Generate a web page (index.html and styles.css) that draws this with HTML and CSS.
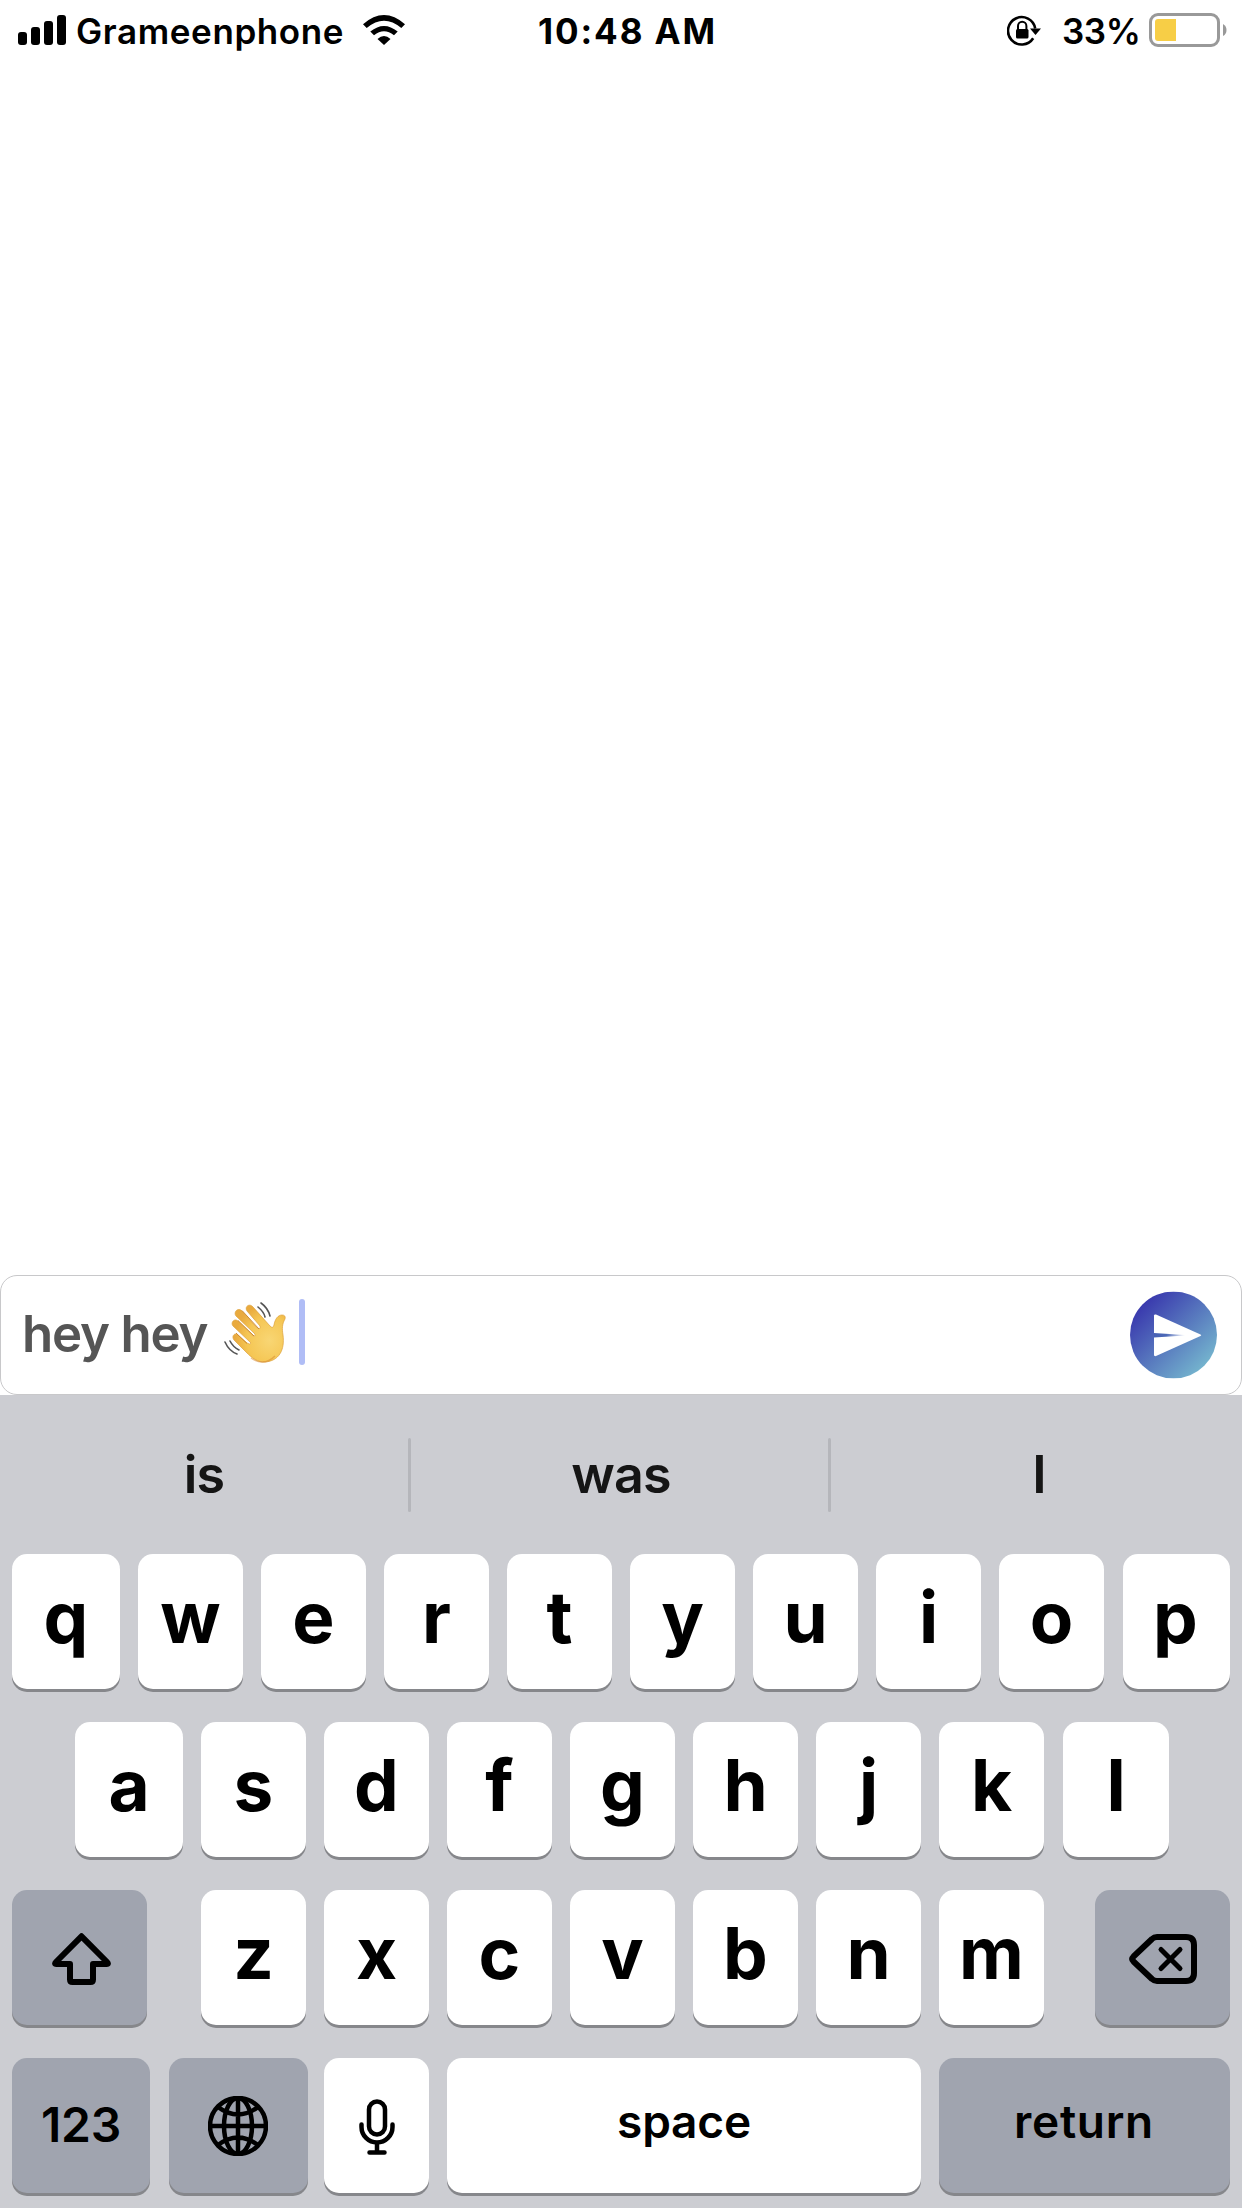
FILE: index.html
```html
<!DOCTYPE html>
<html lang="en">
<head>
<meta charset="utf-8">
<title>Chat</title>
<link rel="stylesheet" href="styles.css">
</head>
<body>
<div class="screen">
  <header class="status">
    <div class="status-left">
      <svg class="signal" width="48" height="30" viewBox="0 0 48 30"><rect x="0" y="17" width="9" height="13" rx="3"/><rect x="13" y="12" width="9" height="18" rx="3"/><rect x="26" y="6" width="9" height="24" rx="3"/><rect x="39" y="0" width="9" height="30" rx="3"/></svg>
      <span class="carrier">Grameenphone</span>
      <svg class="wifi" width="42" height="30" viewBox="0 0 42 30"><path d="M0 9.2Q21-9.200 42 9.200L38.300 13Q21-1.600 3.700 13Z"/><path d="M7.300 16.600Q21 5.200 34.700 16.600L31 20.300Q21 12.400 11 20.300Z"/><path d="M14.500 24Q21 18 27.500 24L21 30Z"/></svg>
    </div>
    <span class="clock">10:48 AM</span>
    <div class="status-right">
      <svg class="lock" width="34" height="31" viewBox="0 0 34 31"><path d="M26.200 23.300A13.700 13.700 0 1 1 28.200 13.500" fill="none" stroke="#000" stroke-width="2.600"/><path d="M23 13.500h11l-5.500 6.500z"/><rect x="9" y="14" width="12.500" height="9.500" rx="1.500"/><path d="M11 15v-4a4.200 4.200 0 0 1 8.400 0v4" fill="none" stroke="#000" stroke-width="2"/></svg>
      <span class="percent">33%</span>
      <svg class="battery" width="78" height="34" viewBox="0 0 78 34"><rect x="1.500" y="1.500" width="68" height="31" rx="7.500" fill="none" stroke="#999" stroke-width="3"/><path d="M6 9Q6 6 9 6H27V28H9Q6 28 6 25Z" fill="#f7ce46"/><path d="M74 11Q77.500 13 77.500 17T74 23Z" fill="#999"/></svg>
    </div>
  </header>
  <main class="messages"></main>
  <div class="composer">
    <span class="draft">hey hey</span>
    <svg class="wave" width="62" height="62" viewBox="0 0 62 62" role="img" aria-label="waving hand">
      <defs><radialGradient id="skin" cx=".7" cy=".62" r=".65"><stop offset="0" stop-color="#f8d674"/><stop offset=".65" stop-color="#f5c653"/><stop offset="1" stop-color="#e9aa3e"/></radialGradient></defs>
      <path d="M41 60C34 61 27 55 23 51L10 38C7 34 11 30 14 33L23 41Q26 43 27 41L9 24C6 20 11 16 14 19L29 34Q32 35 31 32L12 14C9 10 14 5 18 9L33 26Q37 28 36 24L23 9C20 4 26 1 29 5L46 24Q49 27 50 23C51 17 54 13 58 13Q62 13 61 17C58 22 58 27 59 33C61 48 55 59 41 60Z" fill="url(#skin)" stroke="#dda03b" stroke-width=".7"/>
      <path d="M12 31L23 41.500M14 18.500L30 34M18 8.500L35 27" fill="none" stroke="#cf8a2d" stroke-width="1"/>
      <path d="M27 56Q40 65 51 54" fill="none" stroke="#d78d35" stroke-width="1.500" opacity=".55"/>
      <path d="M37 1Q44 6 46 14M34 5Q40 10 41 15M1 40Q5 49 13 52M6 39Q9 45 15 48" fill="none" stroke="#555" stroke-width="1.600" stroke-linecap="round"/>
    </svg>
    <i class="caret"></i>
    <svg class="send" width="87" height="87" viewBox="0 0 87 87"><defs><linearGradient id="send" x1=".15" y1=".15" x2=".85" y2=".85"><stop stop-color="#3a3aae"/><stop offset="1" stop-color="#73b2cd"/></linearGradient><linearGradient id="fold"><stop stop-color="#4861b4"/><stop offset=".4" stop-color="#4c69b7"/><stop offset="1" stop-color="#fff"/></linearGradient></defs><circle cx="43.500" cy="43.500" r="43.500" fill="url(#send)"/><path d="M24 24Q24 22.500 26 23L70.500 43Q72 43.700 70.500 44.500L26 64.500Q24 65 24 63.500Z" fill="#fff"/><path d="M24 41.500L55 43.500V44L24 46Z" fill="url(#fold)"/></svg>
  </div>
  <section class="keyboard">
    <div class="suggestions"><span>is</span><i></i><span>was</span><i></i><span>I</span></div>
    <div class="keys row1"><b>q</b><b>w</b><b>e</b><b>r</b><b>t</b><b>y</b><b>u</b><b>i</b><b>o</b><b>p</b></div>
    <div class="keys row2"><b>a</b><b>s</b><b>d</b><b>f</b><b>g</b><b>h</b><b>j</b><b>k</b><b>l</b></div>
    <div class="keys row3">
      <b class="dark icon shift"><svg width="59" height="52" viewBox="0 0 59 52"><path d="M29.500 3.300L55 29Q57 31 54.500 31H41V46.500Q41 49 38.500 49H20.500Q18 49 18 46.500V31H4.500Q2 31 4 29Z"/></svg></b>
      <b>z</b><b>x</b><b>c</b><b>v</b><b>b</b><b>n</b><b>m</b>
      <b class="dark icon delete"><svg width="68" height="50" viewBox="0 0 68 50"><path d="M28 3H57Q65 3 65 11V39Q65 47 57 47H28Q25 47 23 45L4.500 27.500Q2 25 4.500 22.500L23 5Q25 3 28 3Z"/><path class="cross" d="M32 15.500L51 34.500M51 15.500L32 34.500"/></svg></b>
    </div>
    <div class="keys row4">
      <b class="dark word num">123</b>
      <b class="dark icon globe"><svg width="60" height="60" viewBox="0 0 60 60"><circle cx="30" cy="30" r="28"/><ellipse cx="30" cy="30" rx="14" ry="28"/><path d="M30 2V58M2 30H58M10 11Q30 26 50 11M10 49Q30 34 50 49"/></svg></b>
      <b class="icon"><svg class="mic" width="36" height="56" viewBox="0 0 36 56"><rect x="10" y="2.500" width="16" height="33" rx="8"/><path d="M2.500 25.500V28A15.500 15.500 0 0 0 33.500 28V25.500M18 44V53M10.500 53.500H25.500"/></svg></b>
      <b class="word">space</b>
      <b class="dark word return">return</b>
    </div>
  </section>
</div>
</body>
</html>
```
FILE: styles.css
```css
* { box-sizing: border-box; }
body { margin: 0; background: #fff; font-family: Inter, "Liberation Sans", sans-serif; color: #000; }
svg { display: block; flex: none; }
.screen { width: 1242px; height: 2208px; display: flex; flex-direction: column; overflow: hidden; }
.status { height: 60px; display: grid; grid-template-columns: 537px auto 1fr; flex: none; font-size: 35px; line-height: 60px; white-space: nowrap; padding-top: 1px; }
.status-left { display: flex; padding-left: 18px; }
.signal, .wifi { margin-top: 14px; }
.carrier { width: 287px; margin-left: 10px; font-weight: 600; letter-spacing: .6px; }
.clock { padding-left: 1px; font-weight: 700; letter-spacing: 1.9px; }
.status-right { display: flex; justify-content: flex-end; padding-right: 15px; }
.lock { margin: 14px 21px 0 0; }
.percent { width: 87px; font-weight: 600; letter-spacing: -.4px; }
.battery { margin-top: 12px; }
.messages { flex: 1; }
.composer { height: 120px; flex: none; display: flex; align-items: center; border: 1px solid #c8c8ca; border-radius: 17px; padding: 0 24.500px 0 21px; background: #fff; }
.draft { width: 202px; color: #555; font-size: 51px; font-weight: 600; letter-spacing: -1.2px; line-height: 112px; padding-bottom: 3px; white-space: nowrap; }
.caret { width: 6px; height: 66px; margin-left: 13px; border-radius: 3px; background: #b0bdf6; transform: translateY(-3px); }
.wave { transform: translateY(-2px); }
.send { margin-left: auto; transform: translateY(-.5px); }
.keyboard { height: 813px; flex: none; background: #cccdd2; }
.suggestions { height: 159px; display: grid; grid-template-columns: 408px 3px 417px 3px 411px; align-items: center; text-align: center; color: #151515; font-size: 52px; font-weight: 600; letter-spacing: -.8px; }
.suggestions span:nth-child(3) { padding-left: 3px; }
.suggestions span:last-child { padding-left: 5px; }
.suggestions i { height: 74px; background: #b5b6bb; border-radius: 2px; }
.keys { display: grid; height: 135px; margin-bottom: 33px; column-gap: 18px; }
.keys b { height: 135px; border-radius: 15px; background: #fff; box-shadow: 0 3px 0 #86878b; display: flex; align-items: center; justify-content: center; font-size: 71px; font-weight: 700; line-height: 129px; padding-bottom: 8px; }
.keys b.dark { background: #a0a4af; }
.keys b.word { font-size: 46px; font-weight: 600; letter-spacing: -.2px; padding-bottom: 9px; }
.keys b.num { font-size: 48px; padding-bottom: 3px; }
.keys b.return { letter-spacing: .7px; padding-right: 1px; }
.keys b.icon { padding: 2px 0 0; }
.keys svg { fill: none; stroke: #000; stroke-width: 6; stroke-linecap: round; stroke-linejoin: round; }
.keys .cross { stroke-width: 5; }
.row1 { padding: 0 13px 0 12px; grid-template-columns: 108px repeat(8, 105px) 107px; }
.row1 b:last-child, .row2 b:last-child { margin-left: 1px; margin-right: -1px; }
.row1 b:last-child { padding-right: 2px; }
.row2 { padding-left: 75px; grid-template-columns: 108px repeat(7, 105px) 106px; }
.row3 { padding-left: 12px; grid-template-columns: 171px repeat(7, 105px) 168px; }
.row4 { padding-left: 12px; grid-template-columns: 138px 138px 105px 474px 291px; }
.keys b.globe { margin-left: 1px; margin-right: -2px; padding: 1px 2px 0 0; }
.row3 .shift { width: 135px; }
.keys b.shift { padding: 3px 0 0 4px; }
.row3 .delete { width: 135px; margin-left: 33px; }
.row4 .globe svg, .row4 svg.mic { stroke-width: 4.500; }
```
